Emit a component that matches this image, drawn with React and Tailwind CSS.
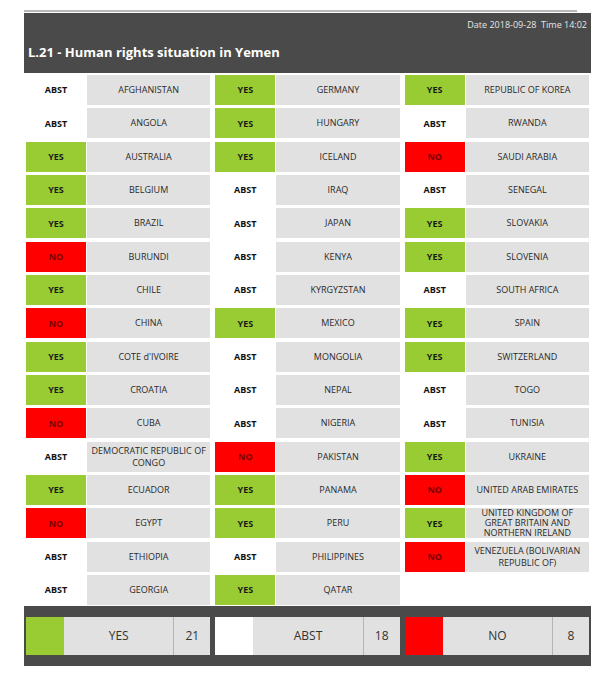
import React from "react";

const C1 = [
  ["ABST", "AFGHANISTAN"],
  ["ABST", "ANGOLA"],
  ["YES", "AUSTRALIA"],
  ["YES", "BELGIUM"],
  ["YES", "BRAZIL"],
  ["NO", "BURUNDI"],
  ["YES", "CHILE"],
  ["NO", "CHINA"],
  ["YES", "COTE d'IVOIRE"],
  ["YES", "CROATIA"],
  ["NO", "CUBA"],
  ["ABST", "DEMOCRATIC REPUBLIC OF CONGO"],
  ["YES", "ECUADOR"],
  ["NO", "EGYPT"],
  ["ABST", "ETHIOPIA"],
  ["ABST", "GEORGIA"],
];
const C2 = [
  ["YES", "GERMANY"],
  ["YES", "HUNGARY"],
  ["YES", "ICELAND"],
  ["ABST", "IRAQ"],
  ["ABST", "JAPAN"],
  ["ABST", "KENYA"],
  ["ABST", "KYRGYZSTAN"],
  ["YES", "MEXICO"],
  ["ABST", "MONGOLIA"],
  ["ABST", "NEPAL"],
  ["ABST", "NIGERIA"],
  ["NO", "PAKISTAN"],
  ["YES", "PANAMA"],
  ["YES", "PERU"],
  ["ABST", "PHILIPPINES"],
  ["YES", "QATAR"],
];
const C3 = [
  ["YES", "REPUBLIC OF KOREA"],
  ["ABST", "RWANDA"],
  ["NO", "SAUDI ARABIA"],
  ["ABST", "SENEGAL"],
  ["YES", "SLOVAKIA"],
  ["YES", "SLOVENIA"],
  ["ABST", "SOUTH AFRICA"],
  ["YES", "SPAIN"],
  ["YES", "SWITZERLAND"],
  ["ABST", "TOGO"],
  ["ABST", "TUNISIA"],
  ["YES", "UKRAINE"],
  ["NO", "UNITED ARAB EMIRATES"],
  ["YES", "UNITED KINGDOM OF GREAT BRITAIN AND NORTHERN IRELAND"],
  ["NO", "VENEZUELA (BOLIVARIAN REPUBLIC OF)"],
  null,
];

function Vote({ v }) {
  if (v === "YES")
    return (
      <div className="w-[60px] shrink-0 bg-[#99cc33] flex items-center justify-center font-bold text-[#1a1a1a]">
        YES
      </div>
    );
  if (v === "NO")
    return (
      <div className="w-[60px] shrink-0 bg-[#ff0000] flex items-center justify-center font-bold text-[#7a0000]">
        NO
      </div>
    );
  return (
    <div className="w-[60px] shrink-0 bg-white flex items-center justify-center font-bold text-[#111]">
      ABST
    </div>
  );
}

function Column({ rows }) {
  return (
    <div className="flex flex-col gap-y-[3.33px]">
      {rows.map((r, i) =>
        r ? (
          <div key={i} className="flex h-[30px] gap-px text-[9px]">
            <Vote v={r[0]} />
            <div
              className={
                r[1].length > 40
                  ? "flex-1 bg-[#e1e1e1] flex items-center justify-center text-center leading-[10px] px-1 text-[#2a2a2a]"
                  : "flex-1 bg-[#e1e1e1] flex items-center justify-center text-center leading-[12px] px-1 text-[#2a2a2a]"
              }
            >
              <span>{r[1]}</span>
            </div>
          </div>
        ) : (
          <div key={i} className="h-[30px]" />
        )
      )}
    </div>
  );
}

function Total({ color, label, n }) {
  return (
    <div className="flex h-[38px]">
      <div className={"w-[38px] shrink-0 " + color} />
      <div className="flex-1 bg-[#e1e1e1] flex items-center justify-center text-[12px] text-[#333]">
        {label}
      </div>
      <div className="w-[37px] shrink-0 bg-[#e1e1e1] border-l border-[#b5b5b5] flex items-center justify-center text-[12px] text-[#333]">
        {n}
      </div>
    </div>
  );
}

export default function App() {
  return (
    <div
      className="w-[599px] h-[673px] bg-white"
      style={{ fontFamily: '"Open Sans", "Noto Sans", sans-serif' }}
    >
      <div className="pl-[24px] pt-[10px]">
        <div className="w-[553px] h-[2px] bg-[#b8b8b8]" />
        <div className="w-[567px] h-[60px] mt-px bg-[#4a4a4a] flex flex-col">
          <div className="flex justify-end pr-[4px] pt-[5px] text-[9px] text-[#e6e6e6] leading-[14px]">
            Date 2018-09-28&nbsp;&nbsp;Time 14:02
          </div>
          <div className="pl-[4px] mt-[11px] text-[13px] font-bold text-white leading-[18px]">
            L.21 - Human rights situation in Yemen
          </div>
        </div>
        <div className="w-[567px] px-[2px] pt-[2px] grid grid-cols-3 gap-x-[5px]">
          <Column rows={C1} />
          <Column rows={C2} />
          <Column rows={C3} />
        </div>
        <div className="w-[567px] mt-[1px] h-[60px] bg-[#4a4a4a] px-[2px] py-[11px] grid grid-cols-3 gap-x-[5px]">
          <Total color="bg-[#99cc33]" label="YES" n="21" />
          <Total color="bg-white" label="ABST" n="18" />
          <Total color="bg-[#ff0000]" label="NO" n="8" />
        </div>
      </div>
    </div>
  );
}
